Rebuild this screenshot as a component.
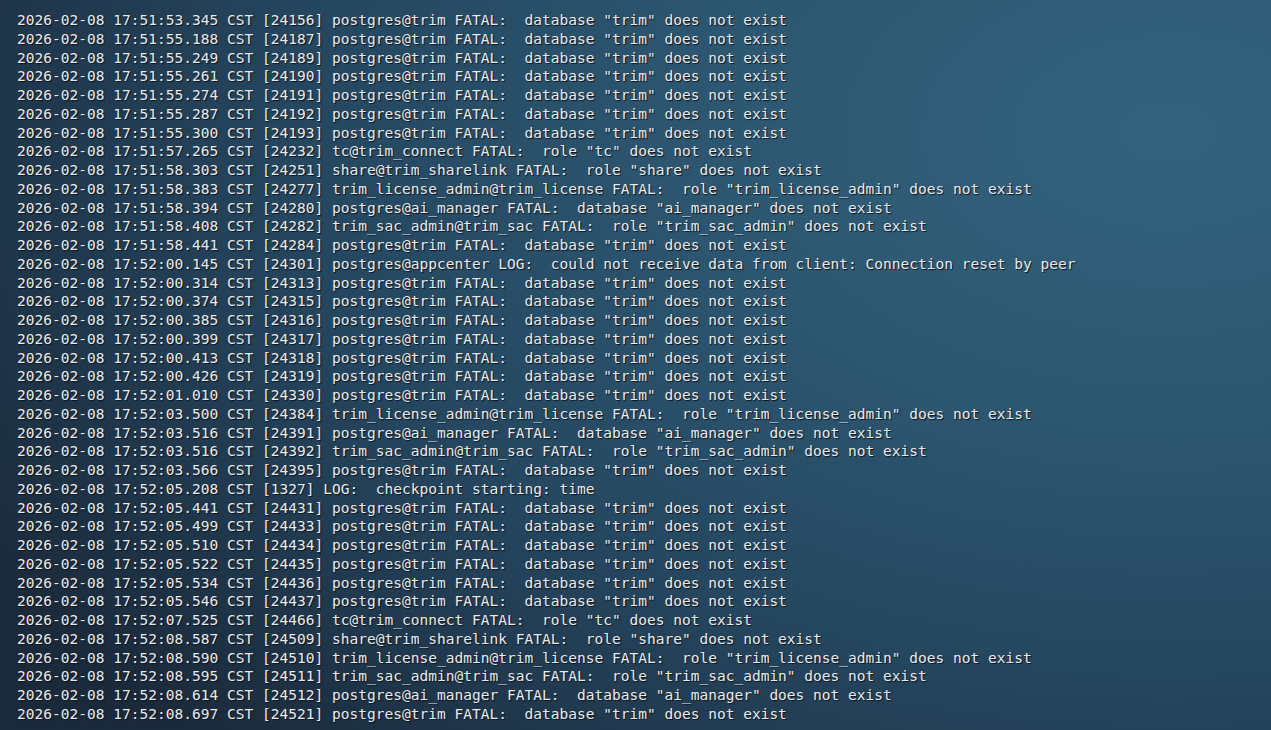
import React from "react";

const lines = [
  '2026-02-08 17:51:53.345 CST [24156] postgres@trim FATAL:  database "trim" does not exist',
  '2026-02-08 17:51:55.188 CST [24187] postgres@trim FATAL:  database "trim" does not exist',
  '2026-02-08 17:51:55.249 CST [24189] postgres@trim FATAL:  database "trim" does not exist',
  '2026-02-08 17:51:55.261 CST [24190] postgres@trim FATAL:  database "trim" does not exist',
  '2026-02-08 17:51:55.274 CST [24191] postgres@trim FATAL:  database "trim" does not exist',
  '2026-02-08 17:51:55.287 CST [24192] postgres@trim FATAL:  database "trim" does not exist',
  '2026-02-08 17:51:55.300 CST [24193] postgres@trim FATAL:  database "trim" does not exist',
  '2026-02-08 17:51:57.265 CST [24232] tc@trim_connect FATAL:  role "tc" does not exist',
  '2026-02-08 17:51:58.303 CST [24251] share@trim_sharelink FATAL:  role "share" does not exist',
  '2026-02-08 17:51:58.383 CST [24277] trim_license_admin@trim_license FATAL:  role "trim_license_admin" does not exist',
  '2026-02-08 17:51:58.394 CST [24280] postgres@ai_manager FATAL:  database "ai_manager" does not exist',
  '2026-02-08 17:51:58.408 CST [24282] trim_sac_admin@trim_sac FATAL:  role "trim_sac_admin" does not exist',
  '2026-02-08 17:51:58.441 CST [24284] postgres@trim FATAL:  database "trim" does not exist',
  '2026-02-08 17:52:00.145 CST [24301] postgres@appcenter LOG:  could not receive data from client: Connection reset by peer',
  '2026-02-08 17:52:00.314 CST [24313] postgres@trim FATAL:  database "trim" does not exist',
  '2026-02-08 17:52:00.374 CST [24315] postgres@trim FATAL:  database "trim" does not exist',
  '2026-02-08 17:52:00.385 CST [24316] postgres@trim FATAL:  database "trim" does not exist',
  '2026-02-08 17:52:00.399 CST [24317] postgres@trim FATAL:  database "trim" does not exist',
  '2026-02-08 17:52:00.413 CST [24318] postgres@trim FATAL:  database "trim" does not exist',
  '2026-02-08 17:52:00.426 CST [24319] postgres@trim FATAL:  database "trim" does not exist',
  '2026-02-08 17:52:01.010 CST [24330] postgres@trim FATAL:  database "trim" does not exist',
  '2026-02-08 17:52:03.500 CST [24384] trim_license_admin@trim_license FATAL:  role "trim_license_admin" does not exist',
  '2026-02-08 17:52:03.516 CST [24391] postgres@ai_manager FATAL:  database "ai_manager" does not exist',
  '2026-02-08 17:52:03.516 CST [24392] trim_sac_admin@trim_sac FATAL:  role "trim_sac_admin" does not exist',
  '2026-02-08 17:52:03.566 CST [24395] postgres@trim FATAL:  database "trim" does not exist',
  '2026-02-08 17:52:05.208 CST [1327] LOG:  checkpoint starting: time',
  '2026-02-08 17:52:05.441 CST [24431] postgres@trim FATAL:  database "trim" does not exist',
  '2026-02-08 17:52:05.499 CST [24433] postgres@trim FATAL:  database "trim" does not exist',
  '2026-02-08 17:52:05.510 CST [24434] postgres@trim FATAL:  database "trim" does not exist',
  '2026-02-08 17:52:05.522 CST [24435] postgres@trim FATAL:  database "trim" does not exist',
  '2026-02-08 17:52:05.534 CST [24436] postgres@trim FATAL:  database "trim" does not exist',
  '2026-02-08 17:52:05.546 CST [24437] postgres@trim FATAL:  database "trim" does not exist',
  '2026-02-08 17:52:07.525 CST [24466] tc@trim_connect FATAL:  role "tc" does not exist',
  '2026-02-08 17:52:08.587 CST [24509] share@trim_sharelink FATAL:  role "share" does not exist',
  '2026-02-08 17:52:08.590 CST [24510] trim_license_admin@trim_license FATAL:  role "trim_license_admin" does not exist',
  '2026-02-08 17:52:08.595 CST [24511] trim_sac_admin@trim_sac FATAL:  role "trim_sac_admin" does not exist',
  '2026-02-08 17:52:08.614 CST [24512] postgres@ai_manager FATAL:  database "ai_manager" does not exist',
  '2026-02-08 17:52:08.697 CST [24521] postgres@trim FATAL:  database "trim" does not exist',
];

export default function App() {
  return (
    <div className="w-[1271px] h-[730px] overflow-hidden bg-[radial-gradient(ellipse_120%_130%_at_92%_18%,#33627e_0%,#2d5771_30%,#25465f_58%,#1b2a3b_90%)]">
      {/* terminal output */}
      <pre className="pl-[17px] pt-[11px] font-['DejaVu_Sans_Mono',monospace] text-[14.54px] leading-[18.75px] text-[#eaeaea] [text-shadow:1px_1px_1px_#0b1520] whitespace-pre">
        {lines.map((line, i) => (
          <div key={i}>{line}</div>
        ))}
      </pre>
    </div>
  );
}
